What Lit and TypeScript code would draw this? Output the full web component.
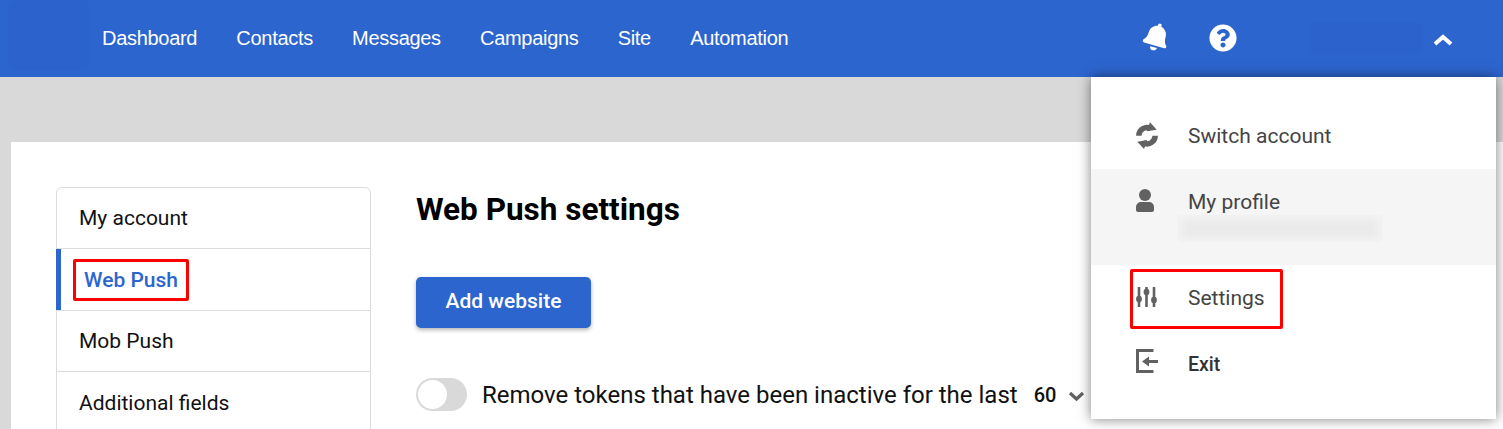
import { LitElement, html, css, svg } from 'lit';
import { customElement } from 'lit/decorators.js';

const NAV = ['Dashboard', 'Contacts', 'Messages', 'Campaigns', 'Site', 'Automation'];

const BELL = 'M224 512c35.32 0 63.97-28.65 63.97-64H160.03c0 35.35 28.65 64 63.97 64zm215.39-149.71c-19.32-20.76-55.47-51.99-55.47-154.29 0-77.7-54.48-139.9-127.94-155.16V32c0-17.67-14.32-32-31.98-32s-31.98 14.33-31.98 32v20.84C118.56 68.1 64.08 130.3 64.08 208c0 102.3-36.15 133.53-55.47 154.29-6 6.45-8.66 14.16-8.61 21.71.11 16.4 12.98 32 32.1 32h383.8c19.12 0 32-15.6 32.1-32 .05-7.55-2.61-15.27-8.61-21.71z';
const HELP = 'M504 256c0 136.997-111.043 248-248 248S8 392.997 8 256C8 119.083 119.043 8 256 8s248 111.083 248 248zM262.655 90c-54.497 0-89.255 22.957-116.549 63.758-3.536 5.286-2.353 12.415 2.715 16.258l34.699 26.31c5.205 3.947 12.621 3.008 16.665-2.122 17.864-22.658 30.113-35.797 57.303-35.797 20.429 0 45.698 13.148 45.698 32.958 0 14.976-12.363 22.667-32.534 33.976C247.128 238.528 216 254.941 216 296v4c0 6.627 5.373 12 12 12h56c6.627 0 12-5.373 12-12v-1.333c0-28.462 83.186-29.647 83.186-106.667 0-58.002-60.165-102-116.531-102zM256 338c-25.365 0-46 20.635-46 46 0 25.364 20.635 46 46 46s46-20.636 46-46c0-25.365-20.635-46-46-46z';

const syncIcon = svg`
  <path d="M2.800 13.700A8.200 8.200 0 0 1 15 6.600M19.200 13.700A8.200 8.200 0 0 1 7 20.800" fill="none" stroke="currentColor" stroke-width="5.400"/>
  <path d="M14 .3L20.700 7.700 10.700 9.300zM8 27L1.300 19.700 11.300 18z"/>`;
const userIcon = svg`
  <circle cx="9" cy="6" r="6"/>
  <path d="M0 21v-3c0-3 2.500-5 5-5h8c2.500 0 5 2 5 5v3c0 1-1 2-2 2H2c-1 0-2-1-2-2z"/>`;
const slidersIcon = svg`
  <path d="M3 0v20M10.500 0v20M18 0v20" stroke="currentColor" stroke-width="2.600" fill="none"/>
  <ellipse cx="3" cy="12" rx="2.900" ry="3.300"/>
  <ellipse cx="10.500" cy="5" rx="2.900" ry="3.300"/>
  <ellipse cx="18" cy="13" rx="2.900" ry="3.300"/>`;
const exitIcon = svg`
  <path d="M17.500 1.500H1.500V22.500H17.500" stroke="currentColor" stroke-width="3" fill="none"/>
  <path d="M6 12.500L13 7.500V11H22V14H13V17.500z"/>`;

@customElement('app-root')
export class AppRoot extends LitElement {
  static styles = css`
    :host {
      display: block;
      height: 429px;
      overflow: hidden;
      position: relative;
      background: #d9d9d9;
      font-family: Roboto, sans-serif;
    }

    /* top bar */
    .top {
      height: 77px;
      background: #2d65cf;
      display: flex;
      align-items: center;
      color: #fff;
    }
    .logo {
      width: 82px;
      height: 70px;
      margin: 0 12px 7px 8px;
      border-radius: 10px;
      background: #2b62cb;
    }
    .nav {
      display: flex;
      gap: 39.2px;
      font: 20px 'Liberation Sans', sans-serif;
      letter-spacing: -0.3px;
    }
    .top-right {
      margin-left: auto;
      display: flex;
      align-items: center;
    }
    .bell {
      width: 25px;
      height: 28px;
      fill: #fff;
      transform: rotate(16deg);
      margin: 0 40px 4px 0;
    }
    .help {
      width: 28px;
      height: 28px;
      fill: #fff;
      margin: 0 73px 2px 0;
    }
    .masked {
      width: 112px;
      height: 33px;
      border-radius: 8px;
      background: #2b62cb;
      margin: 0 11px 0 0;
    }
    .caret {
      width: 20px;
      height: 12px;
      margin: 2px 50px 0 0;
    }

    /* card */
    .card {
      margin: 65px 0 0 11px;
      background: #fff;
      padding: 45px;
      display: flex;
      height: 400px;
      box-sizing: border-box;
    }
    .side {
      width: 315px;
      height: 300px;
      box-sizing: border-box;
      border: 1px solid #dcdcdc;
      border-radius: 6px;
      flex: none;
      font-size: 21px;
      color: #111;
    }
    .side-item {
      height: 61px;
      box-sizing: border-box;
      display: flex;
      align-items: center;
      padding-left: 22px;
      border-bottom: 1px solid #dcdcdc;
    }
    .side-item:last-child {
      height: 63px;
    }
    .side-item.active {
      height: 62px;
      color: #2d65cf;
      font-weight: 500;
      box-shadow: inset 5px 0 0 #2d65cf;
      margin-left: -1px;
      padding-left: 17px;
    }
    .mark {
      border: 3px solid #f00;
      border-radius: 2px;
    }
    .side-item .mark {
      padding: 6px 8px;
      line-height: 24px;
    }
    .main {
      margin-left: 45px;
    }
    h1 {
      margin: 0;
      font-size: 31.500px;
      line-height: 46px;
      font-weight: 700;
      color: #000;
    }
    .btn {
      margin-top: 44px;
      width: 175px;
      height: 51px;
      border: 0;
      padding: 0 0 3px;
      border-radius: 5px;
      background: #2d65cf;
      color: #fff;
      font: 500 21px Roboto, sans-serif;
      box-shadow: 0 2px 4px rgba(0, 0, 0, 0.3);
      display: block;
    }
    .opt {
      margin-top: 50px;
      display: flex;
      align-items: center;
      font-size: 24px;
      color: #111;
      white-space: nowrap;
    }
    .toggle {
      width: 51px;
      height: 33px;
      border-radius: 17px;
      background: #d9d9d9;
      margin-right: 15px;
      padding: 2px;
      box-sizing: border-box;
    }
    .toggle i {
      display: block;
      width: 29px;
      height: 29px;
      border-radius: 50%;
      background: #fff;
    }
    .num {
      margin-left: 16px;
      font-size: 20px;
      font-weight: 500;
    }
    .chev {
      width: 17px;
      height: 11px;
      margin: 3px 0 0 12px;
    }

    /* account dropdown */
    .menu {
      position: absolute;
      left: 1091px;
      top: 77px;
      width: 405px;
      height: 342px;
      background: #fff;
      box-shadow: 0 0 12px rgba(0, 0, 0, 0.5);
      padding-top: 25px;
      box-sizing: border-box;
      color: #444;
      font-size: 21px;
    }
    .row {
      display: flex;
      align-items: center;
      padding-left: 45px;
      height: 67px;
      box-sizing: border-box;
    }
    .ico {
      width: 52px;
      flex: none;
      display: flex;
      color: #616161;
      fill: #616161;
    }
    .row.profile {
      background: #f5f5f5;
      height: 96px;
      padding-top: 20px;
      align-items: flex-start;
    }
    .name {
      padding-top: 1px;
    }
    .stack {
      display: flex;
      flex-direction: column;
    }
    .blur {
      width: 204px;
      height: 27px;
      margin: 1px 0 0 -10px;
      background: #eaeaea;
      box-shadow: inset 0 0 7px 5px #f2f2f2;
    }
    .row.settings {
      padding: 4px 0 0 39px;
      height: 64px;
      align-items: flex-start;
    }
    .settings .mark {
      display: flex;
      width: 153px;
      height: 60px;
      box-sizing: border-box;
      padding: 14px 0 0 3px;
    }
    .settings .ico {
      padding-top: 1px;
      height: 20px;
    }
    .row.exit {
      height: 70px;
      font-weight: 500;
      color: #333;
      font-size: 19.500px;
    }
    .exit .ico {
      margin-top: -6px;
    }
  `;

  render() {
    return html`
      <div class="top">
        <div class="logo"></div>
        <nav class="nav">${NAV.map((n) => html`<span>${n}</span>`)}</nav>
        <div class="top-right">
          <svg class="bell" viewBox="0 0 448 512"><path d=${BELL}></path></svg>
          <svg class="help" viewBox="0 0 512 512"><path d=${HELP}></path></svg>
          <div class="masked"></div>
          <svg class="caret" viewBox="0 0 20 12"><path d="M2 10l8-7 8 7" fill="none" stroke="#fff" stroke-width="4"></path></svg>
        </div>
      </div>

      <div class="card">
        <div class="side">
          <div class="side-item">My account</div>
          <div class="side-item active"><span class="mark">Web Push</span></div>
          <div class="side-item">Mob Push</div>
          <div class="side-item">Additional fields</div>
        </div>
        <div class="main">
          <h1>Web Push settings</h1>
          <button class="btn">Add website</button>
          <div class="opt">
            <div class="toggle"><i></i></div>
            <span>Remove tokens that have been inactive for the last</span>
            <span class="num">60</span>
            <svg class="chev" viewBox="0 0 17 11"><path d="M2 2l6.500 6L15 2" fill="none" stroke="#616161" stroke-width="3.200"></path></svg>
          </div>
        </div>
      </div>

      <div class="menu">
        <div class="row">
          <span class="ico"><svg width="22" height="27" viewBox="0 0 22 27">${syncIcon}</svg></span>
          <span>Switch account</span>
        </div>
        <div class="row profile">
          <span class="ico"><svg width="18" height="23" viewBox="0 0 18 23">${userIcon}</svg></span>
          <div class="stack"><span class="name">My profile</span><div class="blur"></div></div>
        </div>
        <div class="row settings">
          <div class="mark">
            <span class="ico"><svg width="21" height="20" viewBox="0 0 21 20">${slidersIcon}</svg></span>
            <span>Settings</span>
          </div>
        </div>
        <div class="row exit">
          <span class="ico"><svg width="22" height="24" viewBox="0 0 22 24">${exitIcon}</svg></span>
          <span>Exit</span>
        </div>
      </div>
    `;
  }
}
